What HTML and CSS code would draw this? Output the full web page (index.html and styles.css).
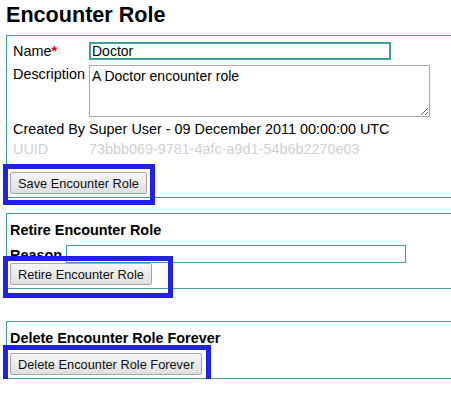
FILE: index.html
```html
<!DOCTYPE html>
<html lang="en">
<head>
<meta charset="UTF-8" />
<title>Encounter Role</title>
<link rel="stylesheet" href="styles.css">
</head>
<body>
<div class="page">
  <h2>Encounter Role</h2>

  <div class="box">
    <table class="form-table">
      <tr>
        <td>Name<span class="required">*</span></td>
        <td><input type="text" class="name-input" value="Doctor" /></td>
      </tr>
      <tr>
        <td class="top">Description</td>
        <td><textarea class="desc-input">A Doctor encounter role</textarea></td>
      </tr>
      <tr>
        <td colspan="2">Created By Super User - 09 December 2011 00:00:00 UTC</td>
      </tr>
      <tr class="faded">
        <td>UUID</td>
        <td>73bbb069-9781-4afc-a9d1-54b6b2270e03</td>
      </tr>
    </table>
    <button class="btn save-btn">Save Encounter Role</button>
  </div>

  <div class="box retire-box">
    <h3>Retire Encounter Role</h3>
    <div class="reason-row">
      <b>Reason</b>
      <input type="text" class="reason-input" />
    </div>
    <button class="btn">Retire Encounter Role</button>
  </div>

  <div class="box purge-box">
    <h3>Delete Encounter Role Forever</h3>
    <button class="btn">Delete Encounter Role Forever</button>
  </div>

  <!-- highlight marks drawn over the buttons -->
  <div class="mark mark-save"></div>
  <div class="mark mark-retire"></div>
  <div class="mark mark-purge"></div>
</div>
</body>
</html>
```

FILE: styles.css
```css
body {
  margin: 0;
  font-family: "Liberation Sans", Arial, sans-serif;
  font-size: 14.4px;
  color: #000;
  background: #fff;
}

.page {
  position: relative;
  padding: 1px 0 0 6px;
}

h2 {
  margin: 0;
  font-size: 21.6px;
  font-weight: bold;
  line-height: 28px;
}

.box {
  border: 1px solid #3f9f9b;
  border-right: none;
  padding: 3px;
  margin-top: 6px;
}

.form-table {
  border-spacing: 2px;
}

.form-table td {
  padding: 1px;
  vertical-align: middle;
}

.form-table td.top {
  vertical-align: top;
  padding-top: 3px;
}

.required {
  color: #e00;
  font-weight: bold;
}

.name-input {
  width: 296px;
  height: 14px;
  margin: 0;
  padding: 0 1px;
  border: 2px solid #3f9f9b;
  font-family: inherit;
  font-size: 14px;
}

.desc-input {
  width: 335px;
  height: 46px;
  margin: 1px 0 0 0;
  padding: 2px;
  border: 1px solid #a9a9a9;
  font-family: inherit;
  font-size: 14px;
  vertical-align: top;
}

.faded td {
  color: #d0d0d0;
}

.btn {
  font-family: inherit;
  font-size: 12.8px;
  height: 22px;
  padding: 0 7px;
  border: 1px solid #a6a6a6;
  border-radius: 2px;
  background: linear-gradient(#f6f6f6, #dedede);
  color: #111;
}

.save-btn {
  margin-top: 12px;
  display: block;
}

h3 {
  margin: 0;
  padding-top: 4px;
  font-size: 14.4px;
  line-height: 18px;
}

.retire-box {
  margin-top: 15px;
}

.reason-row {
  display: flex;
  align-items: flex-end;
  margin-top: 6px;
  height: 18px;
  line-height: 16px;
}

.reason-row b {
  width: 56px;
}

.reason-input {
  width: 338px;
  height: 16px;
  margin: 0;
  padding: 0;
  border: 1px solid #3f9f9b;
}

.retire-box .btn {
  display: block;
}

.purge-box {
  margin-top: 32px;
}

.purge-box .btn {
  display: block;
  margin-top: 6px;
}

.mark {
  position: absolute;
  border: 5px solid #2020e8;
}

.mark-save {
  left: 3px;
  top: 164px;
  width: 142px;
  height: 31px;
}

.mark-retire {
  left: 3px;
  top: 256px;
  width: 160px;
  height: 32px;
}

.mark-purge {
  left: 3px;
  top: 345px;
  width: 198px;
  height: 34px;
}
```
